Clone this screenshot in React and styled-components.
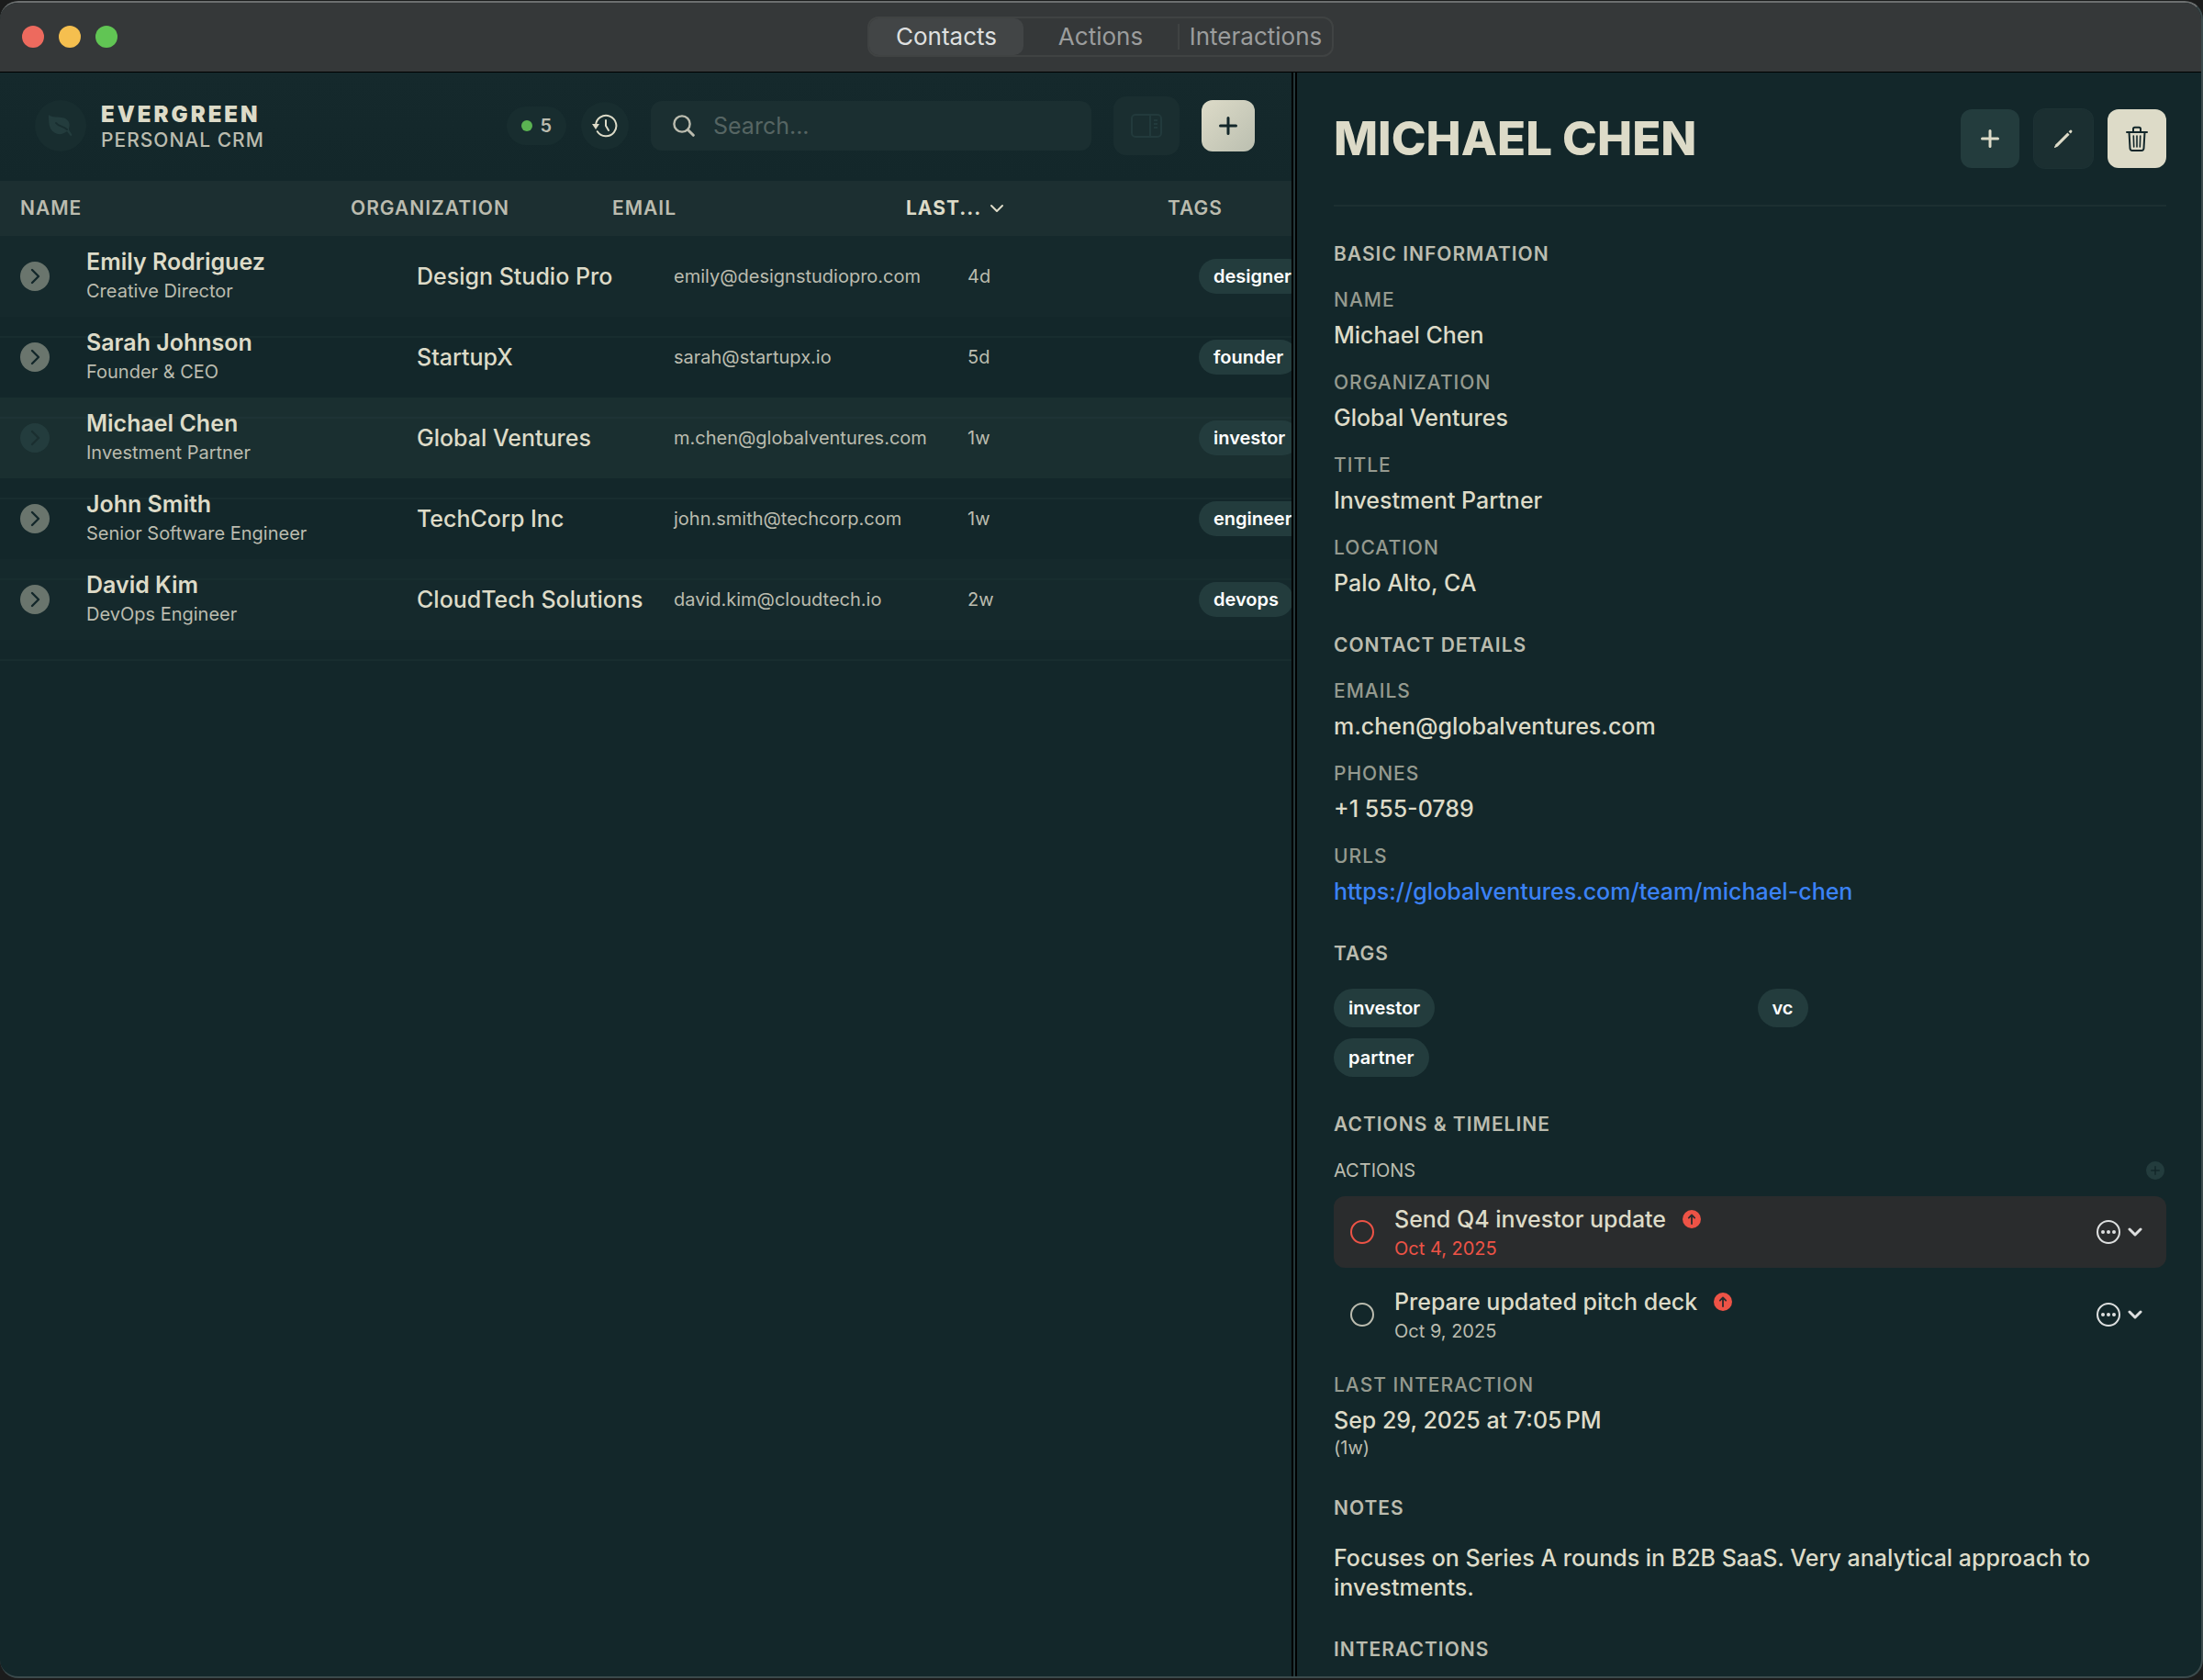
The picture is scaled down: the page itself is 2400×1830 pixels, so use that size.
import React, { useState } from "react";
import styled, { createGlobalStyle, css } from "styled-components";

const contacts = [
  {
    name: "Emily Rodriguez",
    title: "Creative Director",
    org: "Design Studio Pro",
    email: "emily@designstudiopro.com",
    last: "4d",
    tag: "designer",
  },
  {
    name: "Sarah Johnson",
    title: "Founder & CEO",
    org: "StartupX",
    email: "sarah@startupx.io",
    last: "5d",
    tag: "founder",
  },
  {
    name: "Michael Chen",
    title: "Investment Partner",
    org: "Global Ventures",
    email: "m.chen@globalventures.com",
    last: "1w",
    tag: "investor",
  },
  {
    name: "John Smith",
    title: "Senior Software Engineer",
    org: "TechCorp Inc",
    email: "john.smith@techcorp.com",
    last: "1w",
    tag: "engineer",
  },
  {
    name: "David Kim",
    title: "DevOps Engineer",
    org: "CloudTech Solutions",
    email: "david.kim@cloudtech.io",
    last: "2w",
    tag: "devops",
  },
];

const basicInfo = [
  ["Name", "Michael Chen"],
  ["Organization", "Global Ventures"],
  ["Title", "Investment Partner"],
  ["Location", "Palo Alto, CA"],
];

const actions = [
  { id: "q4", title: "Send Q4 investor update", due: "Oct 4, 2025", overdue: true },
  { id: "deck", title: "Prepare updated pitch deck", due: "Oct 9, 2025", overdue: false },
];

const tabs = ["Contacts", "Actions", "Interactions"];

export default function App() {
  const [tab, setTab] = useState("Contacts");
  const [selected, setSelected] = useState("Michael Chen");
  const [done, setDone] = useState({});

  const toggleDone = (id) => {
    setDone((prev) => ({ ...prev, [id]: !prev[id] }));
  };

  return (
    <>
      <GlobalStyle />
      <Desktop>
        <Window>
          <TitleBar>
            <Lights>
              <Light type="button" aria-label="Close" $color="#ed6a5e" />
              <Light type="button" aria-label="Minimize" $color="#f5bf4f" />
              <Light type="button" aria-label="Zoom" $color="#61c554" />
            </Lights>
            <Segmented>
              {tabs.map((name) => (
                <Segment
                  key={name}
                  type="button"
                  $active={tab === name}
                  onClick={() => setTab(name)}
                >
                  {name}
                </Segment>
              ))}
            </Segmented>
          </TitleBar>
          <Split>
            <ListPane>
              <Header />
              <ContactTable selected={selected} setSelected={setSelected} />
            </ListPane>
            <Divider />
            <Detail done={done} toggleDone={toggleDone} />
          </Split>
        </Window>
      </Desktop>
    </>
  );
}

function Header() {
  return (
    <TopBar>
      <Brand>
        <Logo>
          <LeafIcon />
        </Logo>
        <div>
          <BrandName>EVERGREEN</BrandName>
          <BrandSub>PERSONAL CRM</BrandSub>
        </div>
      </Brand>
      <Status>
        <CountPill>
          <Dot />5
        </CountPill>
        <HistoryButton type="button" aria-label="History">
          <HistoryIcon />
        </HistoryButton>
      </Status>
      <SearchBox>
        <SearchIcon />
        <SearchInput type="text" placeholder="Search..." aria-label="Search" />
      </SearchBox>
      <PanelButton type="button" aria-label="Toggle panel">
        <PanelIcon />
      </PanelButton>
      <AddButton type="button" aria-label="Add contact">
        <PlusIcon />
      </AddButton>
    </TopBar>
  );
}

function ContactTable({ selected, setSelected }) {
  return (
    <Table>
      <Head>
        <HeadRow>
          <HeadCell>NAME</HeadCell>
          <HeadCell>ORGANIZATION</HeadCell>
          <HeadCell>EMAIL</HeadCell>
          <HeadCell>
            <SortButton type="button">
              LAST...
              <ChevronIcon width="18" height="10" strokeWidth="2" />
            </SortButton>
          </HeadCell>
          <HeadCell>TAGS</HeadCell>
        </HeadRow>
      </Head>
      <Body>
        {contacts.map((c) => (
          <Row key={c.name} $selected={c.name === selected}>
            <Cell>
              <OpenButton
                type="button"
                aria-label={`Open ${c.name}`}
                $selected={c.name === selected}
                onClick={() => setSelected(c.name)}
              >
                <ArrowIcon />
              </OpenButton>
            </Cell>
            <Cell>
              <Name>{c.name}</Name>
              <Small>{c.title}</Small>
            </Cell>
            <Cell>
              <Org>{c.org}</Org>
            </Cell>
            <Cell>
              <Small>{c.email}</Small>
            </Cell>
            <Cell>
              <Small>{c.last}</Small>
            </Cell>
            <Cell>
              <Tag $compact>{c.tag}</Tag>
            </Cell>
          </Row>
        ))}
      </Body>
    </Table>
  );
}

function Detail({ done, toggleDone }) {
  return (
    <DetailPane>
      <DetailHeader>
        <Title>MICHAEL CHEN</Title>
        <Tools>
          <ToolButton type="button" aria-label="Add" $kind="accent">
            <PlusIcon />
          </ToolButton>
          <ToolButton type="button" aria-label="Edit" $kind="quiet">
            <PencilIcon />
          </ToolButton>
          <ToolButton type="button" aria-label="Delete" $kind="light">
            <TrashIcon />
          </ToolButton>
        </Tools>
      </DetailHeader>

      <Section>
        <SectionTitle>BASIC INFORMATION</SectionTitle>
        <Fields>
          {basicInfo.map(([label, value]) => (
            <Field key={label}>
              <Label>{label}</Label>
              <Value>{value}</Value>
            </Field>
          ))}
        </Fields>
      </Section>

      <Section>
        <SectionTitle>CONTACT DETAILS</SectionTitle>
        <Fields>
          <Field>
            <Label>Emails</Label>
            <Value>m.chen@globalventures.com</Value>
          </Field>
          <Field>
            <Label>Phones</Label>
            <Value>+1 555-0789</Value>
          </Field>
          <Field>
            <Label>URLs</Label>
            <Value>
              <Url href="https://globalventures.com/team/michael-chen">
                https://globalventures.com/team/michael-chen
              </Url>
            </Value>
          </Field>
        </Fields>
      </Section>

      <Section>
        <SectionTitle>TAGS</SectionTitle>
        <TagGrid>
          <Tag>investor</Tag>
          <Tag>vc</Tag>
          <Tag>partner</Tag>
        </TagGrid>
      </Section>

      <Section>
        <SectionTitle>ACTIONS &amp; TIMELINE</SectionTitle>
        <div>
          <ActionsHead>
            ACTIONS
            <RoundAdd type="button" aria-label="Add action">
              <PlusIcon />
            </RoundAdd>
          </ActionsHead>
          <ActionList>
            {actions.map((a) => (
              <Action key={a.id} $overdue={a.overdue}>
                <Check
                  type="checkbox"
                  id={a.id}
                  checked={!!done[a.id]}
                  onChange={() => toggleDone(a.id)}
                  $overdue={a.overdue}
                />
                <ActionText htmlFor={a.id}>
                  <ActionTitle>
                    {a.title}
                    <PriorityIcon />
                  </ActionTitle>
                  <Due $overdue={a.overdue}>{a.due}</Due>
                </ActionText>
                <MenuButton type="button" aria-label="More">
                  <MoreIcon />
                  <ChevronIcon width="16" height="10" strokeWidth="3" />
                </MenuButton>
              </Action>
            ))}
          </ActionList>
        </div>
        <Field>
          <Label>Last interaction</Label>
          <Value>Sep 29, 2025 at 7:05{"\u202f"}PM</Value>
          <Ago>(1w)</Ago>
        </Field>
      </Section>

      <Section>
        <SectionTitle>NOTES</SectionTitle>
        <Value as="p">
          Focuses on Series A rounds in B2B SaaS. Very analytical approach to
          investments.
        </Value>
      </Section>

      <Section>
        <SectionTitle>INTERACTIONS</SectionTitle>
      </Section>
    </DetailPane>
  );
}

const LeafIcon = () => (
  <svg width="28" height="28" viewBox="0 0 28 28">
    <path
      d="M1 2c3 3 8 2 14 3 8 1 10 7 8 12 0 2 1 3 3 6 1 2-1 3-2 1l-3-4C15 25 7 24 3 17 1 13 1 7 1 2Z"
      fill="#233c3d"
    />
    <path
      d="M9 11c3 4 8 3 12 7"
      fill="none"
      stroke="#182d2f"
      strokeWidth="2"
      strokeLinecap="round"
    />
  </svg>
);

const HistoryIcon = () => (
  <svg width="28" height="26" viewBox="0 0 28 26" fill="none">
    <path
      d="M4 12.500A11.200 11.200 0 1 1 5.800 19.200"
      stroke="#dddbc8"
      strokeWidth="2"
      strokeLinecap="round"
    />
    <path d="M0 11h8l-4 6Z" fill="#dddbc8" />
    <path
      d="M15 7v6l3 5"
      stroke="#dddbc8"
      strokeWidth="2"
      strokeLinecap="round"
      strokeLinejoin="round"
    />
  </svg>
);

const SearchIcon = () => (
  <svg width="24" height="24" viewBox="0 0 24 24" fill="none">
    <circle cx="10" cy="10" r="8.6" stroke="#bbbcaf" strokeWidth="2.4" />
    <path d="m16.5 16.5 5.8 5.8" stroke="#bbbcaf" strokeWidth="3" strokeLinecap="round" />
  </svg>
);

const PanelIcon = () => (
  <svg width="34" height="26" viewBox="0 0 34 26" fill="none" stroke="#223a3c">
    <rect x="1" y="1" width="32" height="24" rx="4" strokeWidth="2" />
    <path d="M21 1v24" strokeWidth="2" />
    <path d="M25 7h4M25 11h4M25 15h4" strokeWidth="2" />
  </svg>
);

const PlusIcon = () => (
  <svg width="20" height="20" viewBox="0 0 20 20">
    <path d="M10 1.5v17M1.5 10h17" stroke="currentColor" strokeWidth="3" strokeLinecap="round" />
  </svg>
);

const ChevronIcon = ({ width, height, strokeWidth }) => (
  <svg width={width} height={height} viewBox="0 0 16 10" fill="none">
    <path
      d="m2 2 6 6 6-6"
      stroke="currentColor"
      strokeWidth={strokeWidth}
      strokeLinecap="round"
      strokeLinejoin="round"
    />
  </svg>
);

const ArrowIcon = () => (
  <svg width="12" height="18" viewBox="0 0 12 18" fill="none">
    <path
      d="m3 2 7 7-7 7"
      stroke="currentColor"
      strokeWidth="2.4"
      strokeLinecap="round"
      strokeLinejoin="round"
    />
  </svg>
);

const PencilIcon = () => (
  <svg width="22" height="22" viewBox="0 0 22 22" fill="#dddbc8">
    <path d="m15.400 4.600 2.200 2.200L4.800 19.400 1.700 21q-.9.200-.7-.7l1.600-3.100Z" />
    <path d="m16.600 3.400 1.200-1.500q1.200-1 2.200 0t.1 2.200l-1.300 1.400Z" />
  </svg>
);

const TrashIcon = () => (
  <svg
    width="24"
    height="28"
    viewBox="0 0 24 28"
    fill="none"
    stroke="#13272a"
    strokeWidth="2"
    strokeLinecap="round"
  >
    <path d="M1 7h22" />
    <path d="M8 6.500V3.500q0-1.700 1.700-1.700h4.600q1.700 0 1.700 1.700v3" />
    <path d="m3.500 7 1 17.500q.2 2.500 2.500 2.500h10q2.300 0 2.500-2.500l1-17.500" />
    <path d="m8.300 11 .4 12M12 11v12M15.700 11l-.4 12" strokeWidth="1.600" />
  </svg>
);

const PriorityIcon = () => (
  <svg width="20" height="20" viewBox="0 0 22 22" fill="none">
    <circle cx="11" cy="11" r="11" fill="#ed5346" />
    <path
      d="M11 16.500V6M7.500 9.500 11 6l3.500 3.500"
      stroke="#2a2c2d"
      strokeWidth="2"
      strokeLinecap="round"
      strokeLinejoin="round"
    />
  </svg>
);

const MoreIcon = () => (
  <svg width="26" height="26" viewBox="0 0 26 26" fill="#dddfdf">
    <circle cx="13" cy="13" r="12" fill="none" stroke="#dddfdf" strokeWidth="2" />
    <circle cx="7" cy="13" r="2" />
    <circle cx="13" cy="13" r="2" />
    <circle cx="19" cy="13" r="2" />
  </svg>
);

const GlobalStyle = createGlobalStyle`
  * {
    box-sizing: border-box;
  }

  body {
    margin: 0;
    background: #1b1c1c;
    font-family: Inter, "Liberation Sans", sans-serif;
    color: #dddbc8;
  }

  button {
    border: 0;
    padding: 0;
    background: none;
    color: inherit;
    font: inherit;
    cursor: pointer;
  }

  h1, h2, p {
    margin: 0;
  }
`;

const center = css`
  display: flex;
  align-items: center;
  justify-content: center;
`;

// small capitals used for column heads, section titles and field labels
const caps = css`
  font-size: 21px;
  line-height: 24px;
  letter-spacing: 1px;
`;

const body = css`
  font-size: 25px;
  line-height: 32px;
  font-weight: 500;
`;

const Desktop = styled.div`
  height: 100vh;
  padding: 1px 0 2px;
`;

const Window = styled.div`
  height: 100%;
  display: flex;
  flex-direction: column;
  overflow: hidden;
  border: solid #3b4a4c;
  border-width: 2px 2px 2px 0;
  border-top-color: #6c6f6f;
  border-radius: 20px;
  background: #13272a;
`;

const TitleBar = styled.header`
  height: 76px;
  flex-shrink: 0;
  display: grid;
  grid-template-columns: 1fr auto 1fr;
  align-items: center;
  padding: 0 24px 2px;
  background: #353839;
  border-bottom: 1px solid #000;
`;

const Lights = styled.div`
  display: flex;
  gap: 16px;
`;

const Light = styled.button`
  width: 24px;
  height: 24px;
  border-radius: 50%;
  background: ${({ $color }) => $color};
`;

const Segmented = styled.nav`
  display: grid;
  grid-template-columns: repeat(3, 168px);
  border: 2px solid #404343;
  border-radius: 12px;
`;

const Segment = styled.button`
  height: 40px;
  border-radius: 10px;
  font-size: 26px;
  line-height: 28px;
  color: ${({ $active }) => ($active ? "#dfe0e0" : "#9b9d9d")};
  background: ${({ $active }) => ($active ? "#424546" : "none")};

  &:last-child {
    height: 28px;
    align-self: center;
    border-left: 2px solid #404343;
    border-radius: 0;
  }
`;

const Split = styled.main`
  flex: 1;
  min-height: 0;
  display: grid;
  grid-template-columns: minmax(0, 1407fr) 6px minmax(0, 985fr);
`;

const ListPane = styled.section`
  min-width: 0;
  overflow: hidden;
`;

const Divider = styled.div`
  border: solid #000;
  border-width: 0 2px;
  background: #24383b;
`;

const TopBar = styled.div`
  height: 118px;
  display: flex;
  align-items: center;
  gap: 24px;
  padding: 0 40px 2px 38px;
  background: linear-gradient(#15292c, #13272a);
`;

const Brand = styled.div`
  flex: 1;
  display: flex;
  align-items: center;
  gap: 16px;
  white-space: nowrap;
`;

const Logo = styled.div`
  ${center}
  width: 56px;
  height: 56px;
  border-radius: 50%;
  background: #182d2f;
`;

const BrandName = styled.div`
  font-size: 24px;
  line-height: 32px;
  font-weight: 900;
  letter-spacing: 3px;
`;

const BrandSub = styled.div`
  ${caps}
  font-weight: 500;
  color: #bbbcaf;
`;

const Status = styled.div`
  display: flex;
  align-items: center;
  gap: 16px;
`;

const CountPill = styled.div`
  ${center}
  gap: 8px;
  height: 42px;
  padding: 0 16px;
  border-radius: 21px;
  background: #182d2f;
  font-size: 20px;
  font-weight: 600;
  color: #bbbcaf;
`;

const Dot = styled.span`
  width: 12px;
  height: 12px;
  border-radius: 50%;
  background: #5bb352;
`;

const HistoryButton = styled.button`
  ${center}
  width: 52px;
  height: 52px;
  border-radius: 50%;
  background: #182d2f;
`;

const SearchBox = styled.label`
  flex: 0 1 480px;
  height: 54px;
  display: flex;
  align-items: center;
  gap: 20px;
  padding: 0 24px;
  border-radius: 12px;
  background: #1b2f31;
`;

const SearchInput = styled.input`
  flex: 1;
  min-width: 0;
  border: 0;
  padding: 0;
  outline: 0;
  background: none;
  font: inherit;
  font-size: 25px;
  color: #dddbc8;

  &::placeholder {
    color: #566563;
    opacity: 1;
  }
`;

const PanelButton = styled.button`
  ${center}
  width: 72px;
  height: 64px;
  border-radius: 14px;
  background: #1a2e30;
`;

const AddButton = styled.button`
  ${center}
  width: 58px;
  height: 56px;
  border-radius: 12px;
  background: linear-gradient(135deg, #dddbc8, #bbbfb0);
  color: #13272a;
`;

const Table = styled.table`
  display: block;
  white-space: nowrap;
`;

const Head = styled.thead`
  display: block;
`;

const HeadRow = styled.tr`
  height: 60px;
  display: grid;
  grid-template-columns: 360px 285px 320px 285px 1fr;
  align-items: center;
  padding-left: 22px;
  background: #1c2f31;
`;

const HeadCell = styled.th`
  ${caps}
  padding: 0;
  text-align: left;
  font-weight: 600;
  color: #bbbcaf;
`;

const SortButton = styled.button`
  ${caps}
  display: flex;
  align-items: center;
  gap: 8px;
  font-weight: 700;
  color: #dddbc8;
`;

// the separator is drawn 21px inside the next row
const hairline = css`
  background-image: linear-gradient(#182d2f, #182d2f);
  background-size: 100% 2px;
  background-position: 0 21px;
  background-repeat: no-repeat;
`;

const Body = styled.tbody`
  display: block;

  &::after {
    content: "";
    display: block;
    height: 24px;
    ${hairline}
  }
`;

const Row = styled.tr`
  height: 88px;
  display: grid;
  grid-template-columns: 72px 360px 280px 320px 252px 1fr;
  align-items: center;
  padding-left: 22px;
  background-color: #13272a;

  &:nth-child(odd) {
    background-color: #15292c;
  }

  & + & {
    ${hairline}
  }

  ${({ $selected }) =>
    $selected &&
    css`
      &&:nth-child(n) {
        background-color: #1a2f30;
        background-image: linear-gradient(#1e3335, #1e3335);
      }
    `}
`;

const Cell = styled.td`
  min-width: 0;
  padding: 0;
`;

const OpenButton = styled.button`
  ${center}
  width: 32px;
  height: 32px;
  border-radius: 50%;
  color: #13272a;
  background: #6a756d;

  ${({ $selected }) =>
    $selected &&
    css`
      color: #1a2f30;
      background: #233c3d;
    `}
`;

const Name = styled.div`
  ${body}
  font-weight: 600;
`;

const Org = styled.div`
  ${body}
`;

const Small = styled.div`
  font-size: 20px;
  line-height: 32px;
  color: #bbbcaf;
`;

const Tag = styled.span`
  display: inline-flex;
  align-items: center;
  justify-self: start;
  height: ${({ $compact }) => ($compact ? "38px" : "42px")};
  padding: 0 16px;
  border-radius: 21px;
  background: #233c3d;
  font-size: 20px;
  font-weight: 600;
  color: #fff;
  vertical-align: middle;
`;

const DetailPane = styled.aside`
  min-width: 0;
  overflow: auto;
  scrollbar-width: none;
  display: flex;
  flex-direction: column;
  gap: 40px;
  padding: 40px 38px 0 40px;
`;

const DetailHeader = styled.div`
  display: flex;
  align-items: center;
  justify-content: space-between;
  padding-bottom: 40px;
  border-bottom: 2px solid #1c2f31;
`;

const Title = styled.h1`
  font-size: 51px;
  line-height: 64px;
  font-weight: 800;
  white-space: nowrap;
`;

const Tools = styled.div`
  display: flex;
  gap: 16px;
`;

const ToolButton = styled.button`
  ${center}
  width: 64px;
  height: 64px;
  border-radius: 12px;

  ${({ $kind }) => $kind === "accent" && "background: #233c3d;"}
  ${({ $kind }) => $kind === "light" && "background: #dddbc8;"}
  ${({ $kind }) =>
    $kind === "quiet" && "background: #1b2f31; box-shadow: 0 0 0 1px #1d3234;"}
`;

const Section = styled.section`
  display: flex;
  flex-direction: column;
  gap: 26px;
`;

const SectionTitle = styled.h2`
  ${caps}
  font-weight: 600;
  color: #bbbcaf;
`;

const Fields = styled.div`
  display: flex;
  flex-direction: column;
  gap: 24px;
`;

const Field = styled.div`
  min-width: 0;
`;

const Label = styled.div`
  ${caps}
  margin-bottom: 10px;
  font-weight: 500;
  text-transform: uppercase;
  color: #959a8f;
`;

const Value = styled.div`
  ${body}
`;

const Url = styled.a`
  color: #3b82f6;
  text-decoration: none;
`;

const TagGrid = styled.div`
  display: grid;
  grid-template-columns: 1fr 1fr;
  gap: 12px 16px;
`;

const ActionsHead = styled.div`
  display: flex;
  align-items: center;
  justify-content: space-between;
  margin-bottom: 16px;
  padding-right: 2px;
  font-size: 20px;
  line-height: 24px;
  color: #bbbcaf;
`;

const RoundAdd = styled.button`
  ${center}
  width: 20px;
  height: 20px;
  border-radius: 50%;
  background: #233c3d;
  color: #13272a;

  svg {
    width: 10px;
    height: 10px;
  }
`;

const ActionList = styled.div`
  display: flex;
  flex-direction: column;
  gap: 12px;
`;

const Action = styled.div`
  height: 78px;
  display: flex;
  align-items: center;
  gap: 22px;
  padding: 0 26px 0 18px;
  border-radius: 12px;
  background: ${({ $overdue }) => ($overdue ? "#2a2c2d" : "none")};
`;

const Check = styled.input`
  appearance: none;
  width: 26px;
  height: 26px;
  margin: 0;
  border: 2px solid ${({ $overdue }) => ($overdue ? "#ed5346" : "#bbbcaf")};
  border-radius: 50%;

  &:checked {
    background: currentColor;
  }
`;

const ActionText = styled.label`
  flex: 1;
  min-width: 0;
  padding-top: 4px;
`;

const ActionTitle = styled.span`
  ${body}
  display: flex;
  align-items: center;
  gap: 18px;
`;

const Due = styled.span`
  display: block;
  font-size: 20px;
  line-height: 32px;
  color: ${({ $overdue }) => ($overdue ? "#ed5346" : "#bbbcaf")};
`;

const MenuButton = styled.button`
  display: flex;
  align-items: center;
  gap: 8px;
  color: #dddfdf;
`;

const Ago = styled.div`
  font-size: 20px;
  line-height: 28px;
  color: #bbbcaf;
`;
